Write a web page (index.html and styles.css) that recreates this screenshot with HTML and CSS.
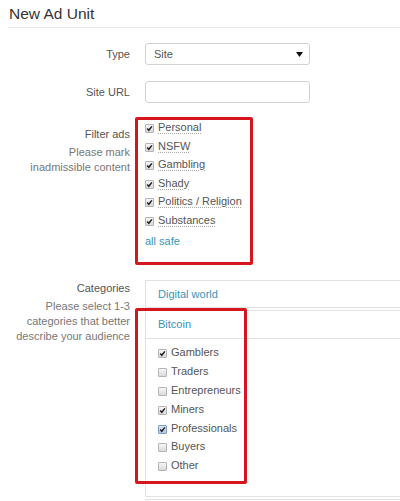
FILE: index.html
```html
<!DOCTYPE html>
<html>
<head>
<meta charset="utf-8">
<link rel="stylesheet" href="styles.css">
</head>
<body>
<div class="page">
  <h1 class="title">New Ad Unit</h1>
  <div class="form">
    <div class="row row-type">
      <div class="label-col"><div class="label label-inline">Type</div></div>
      <div class="control-col">
        <div class="select">
          <span>Site</span>
          <svg class="caret" width="7" height="5" viewBox="0 0 7 5"><path d="M0 0 L7 0 L3.5 5 Z" fill="#111"/></svg>
        </div>
      </div>
    </div>
    <div class="row row-url">
      <div class="label-col"><div class="label label-inline">Site URL</div></div>
      <div class="control-col"><div class="input"></div></div>
    </div>
    <div class="row row-filter">
      <div class="label-col label-filter">
        <div class="label">Filter ads</div>
        <div class="help">Please mark<br>inadmissible content</div>
      </div>
      <div class="control-col">
        <div class="redbox filter-box">
          <div class="check-list">
            <div class="check"><span class="box checked"><svg width="9" height="9" viewBox="0 0 9 9"><path d="M2.2 4.6 L3.8 6.3 L6.9 2.4" fill="none" stroke="#222" stroke-width="1.5"/></svg></span><span class="dotted">Personal</span></div>
            <div class="check"><span class="box checked"><svg width="9" height="9" viewBox="0 0 9 9"><path d="M2.2 4.6 L3.8 6.3 L6.9 2.4" fill="none" stroke="#222" stroke-width="1.5"/></svg></span><span class="dotted">NSFW</span></div>
            <div class="check"><span class="box checked"><svg width="9" height="9" viewBox="0 0 9 9"><path d="M2.2 4.6 L3.8 6.3 L6.9 2.4" fill="none" stroke="#222" stroke-width="1.5"/></svg></span><span class="dotted">Gambling</span></div>
            <div class="check"><span class="box checked"><svg width="9" height="9" viewBox="0 0 9 9"><path d="M2.2 4.6 L3.8 6.3 L6.9 2.4" fill="none" stroke="#222" stroke-width="1.5"/></svg></span><span class="dotted">Shady</span></div>
            <div class="check"><span class="box checked"><svg width="9" height="9" viewBox="0 0 9 9"><path d="M2.2 4.6 L3.8 6.3 L6.9 2.4" fill="none" stroke="#222" stroke-width="1.5"/></svg></span><span class="dotted">Politics / Religion</span></div>
            <div class="check"><span class="box checked"><svg width="9" height="9" viewBox="0 0 9 9"><path d="M2.2 4.6 L3.8 6.3 L6.9 2.4" fill="none" stroke="#222" stroke-width="1.5"/></svg></span><span class="dotted">Substances</span></div>
          </div>
          <div class="link all-safe">all safe</div>
        </div>
      </div>
    </div>
    <div class="row row-cat">
      <div class="label-col label-cat">
        <div class="label">Categories</div>
        <div class="help">Please select 1-3<br>categories that better<br>describe your audience</div>
      </div>
      <div class="control-col">
        <div class="panel">
          <div class="panel-head head-first link">Digital world</div>
        </div>
        <div class="panel panel-open">
          <div class="redbox cat-box"></div>
          <div class="panel-head head-second link">Bitcoin</div>
          <div class="panel-body">
            <div class="check"><span class="box checked"><svg width="9" height="9" viewBox="0 0 9 9"><path d="M2.2 4.6 L3.8 6.3 L6.9 2.4" fill="none" stroke="#222" stroke-width="1.5"/></svg></span><span>Gamblers</span></div>
            <div class="check"><span class="box"></span><span>Traders</span></div>
            <div class="check"><span class="box"></span><span>Entrepreneurs</span></div>
            <div class="check"><span class="box checked"><svg width="9" height="9" viewBox="0 0 9 9"><path d="M2.2 4.6 L3.8 6.3 L6.9 2.4" fill="none" stroke="#222" stroke-width="1.5"/></svg></span><span>Miners</span></div>
            <div class="check"><span class="box checked focus"><svg width="9" height="9" viewBox="0 0 9 9"><path d="M2.2 4.6 L3.8 6.3 L6.9 2.4" fill="none" stroke="#222" stroke-width="1.5"/></svg></span><span>Professionals</span></div>
            <div class="check"><span class="box"></span><span>Buyers</span></div>
            <div class="check"><span class="box"></span><span>Other</span></div>
          </div>
        </div>
        <div class="panel panel-last"></div>
      </div>
    </div>
  </div>
</div>
</body>
</html>
```

FILE: styles.css
```css
html, body {
  margin: 0;
  padding: 0;
  overflow: hidden;
  background: #fff;
}
body {
  font-family: "Liberation Sans", Arial, sans-serif;
  font-size: 11px;
  color: #555;
}
.page {
  width: 400px;
  height: 501px;
  overflow: hidden;
}
.title {
  margin: 5px 0 0 8px;
  padding: 0 0 4px 1px;
  font-size: 15.5px;
  line-height: 18px;
  font-weight: normal;
  color: #333;
  border-bottom: 1px solid #e8e8e8;
}
.form {
  margin-top: 15px;
}
.row {
  display: grid;
  grid-template-columns: 130px 1fr;
  column-gap: 15px;
}
.row-type { margin-bottom: 16px; }
.row-url { margin-bottom: 14px; }
.row-filter { margin-bottom: 15px; }
.label-col {
  text-align: right;
}
.label {
  line-height: 15px;
  color: #555;
}
.label-inline {
  line-height: 22px;
}
.help {
  margin-top: 3px;
  line-height: 15px;
  color: #777;
}
.label-filter { padding-top: 9.5px; }
.label-cat { padding-top: 1.5px; }
.control-col {
  min-width: 0;
}
.select, .input {
  box-sizing: border-box;
  width: 165px;
  height: 22px;
  border: 1px solid #d2d2d2;
  border-radius: 3px;
  background: #fff;
}
.select {
  display: flex;
  align-items: center;
  justify-content: space-between;
  padding: 0 6px 0 8px;
  color: #555;
}
.caret {
  display: block;
}
.redbox {
  box-sizing: border-box;
  border: 3px solid #d6161f;
  border-radius: 2px;
}
.filter-box {
  width: 118px;
  margin-left: -10px;
  padding: 0 0 12.5px 7px;
}
.check-list {
  display: flex;
  flex-direction: column;
  gap: 3.6px;
}
.check {
  display: flex;
  align-items: center;
  gap: 4px;
  line-height: 15px;
  height: 15px;
  color: #555;
  white-space: nowrap;
}
.box {
  box-sizing: border-box;
  flex: none;
  width: 9px;
  height: 9px;
  margin-top: 2px;
  border: 1px solid #b4b4b4;
  border-radius: 1px;
  background: linear-gradient(#f6f6f6, #dadada);
  position: relative;
}
.box svg {
  position: absolute;
  left: -1px;
  top: -1px;
}
.box.focus {
  border-color: #7f9cc4;
  background: linear-gradient(#dbe5f2, #b9cbe3);
}
.dotted {
  text-decoration: underline dotted #aaa;
  text-underline-offset: 2px;
}
.link {
  color: #3a93b8;
}
.all-safe {
  margin-top: 6.5px;
  line-height: 15px;
}
.panel {
  box-sizing: border-box;
  width: 100%;
  border: 1px solid #e2e2e2;
  border-right: none;
  margin-bottom: 2px;
  position: relative;
  background: #fff;
}
.panel-last {
  height: 20px;
}
.panel-head {
  padding-left: 12px;
  line-height: 26px;
  height: 26px;
}
.head-second {
  height: 27px;
  line-height: 27px;
  border-bottom: 1px solid #e2e2e2;
}
.panel-body {
  padding: 6.5px 0 23px 12px;
  display: flex;
  flex-direction: column;
  gap: 3.8px;
}
.cat-box {
  position: absolute;
  left: -11px;
  top: -3px;
  width: 112px;
  height: 176px;
}
```
